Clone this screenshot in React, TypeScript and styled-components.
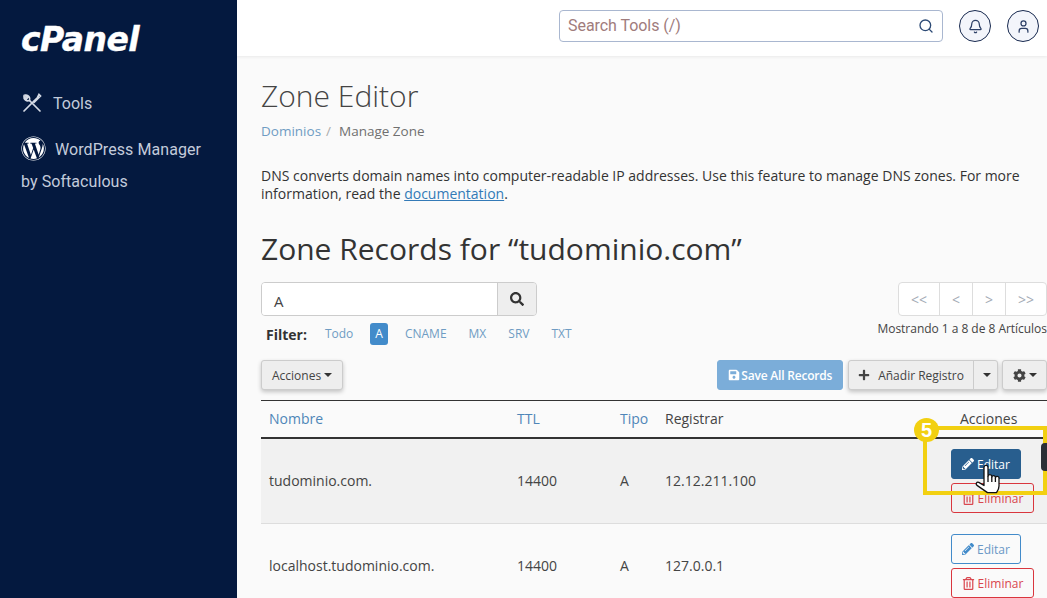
import React from 'react'
import styled, { createGlobalStyle } from 'styled-components'
import { Search, Bell, User } from 'lucide-react'
import { FaCog, FaPencilAlt, FaPlus, FaRegTrashAlt, FaSave, FaSearch, FaWordpress } from 'react-icons/fa'

const GlobalStyle = createGlobalStyle`
  html, body {
    margin: 0;
    height: 598px;
    overflow: hidden;
    background: #fafafa;
  }
  * {
    box-sizing: border-box;
  }
`

const Page = styled.div`
  position: relative;
  display: grid;
  grid-template-columns: 237px 810px;
  width: 1047px;
  height: 598px;
  overflow: hidden;
  font-family: 'Open Sans', sans-serif;
  color: #333;
`

const Sidebar = styled.aside`
  background: #04193f;
  padding: 24px 0 0 21px;
  font-family: Roboto, sans-serif;
  color: #c3cbdb;
  font-size: 16px;
`

const Logo = styled.div`
  font-family: 'DejaVu Sans', sans-serif;
  font-weight: 700;
  font-style: italic;
  font-size: 33px;
  line-height: 32px;
  letter-spacing: -0.5px;
  -webkit-text-stroke: 0.4px #fff;
  color: #fff;
  margin-bottom: 31px;
`

const NavItem = styled.div`
  display: flex;
  align-items: center;
  gap: 11px;
  height: 32px;
  margin-left: 1px;
  margin-bottom: 15px;
`

const WordpressItem = styled.div`
  line-height: 32px;
  letter-spacing: 0.07px;

  svg {
    vertical-align: -6px;
    margin-right: 9px;
    color: #fff;
  }
`

const Main = styled.main`
  display: flex;
  flex-direction: column;
  min-width: 0;
`

const TopBar = styled.header`
  display: flex;
  align-items: center;
  justify-content: flex-end;
  gap: 16px;
  height: 56px;
  flex: none;
  padding: 0 8px 4px 0;
  background: #fff;
  box-shadow: 0 1px 3px rgba(0, 0, 0, 0.07);
`

const ToolSearch = styled.div`
  display: flex;
  align-items: center;
  justify-content: space-between;
  width: 384px;
  height: 32px;
  padding: 0 8px 2px;
  background: #fff;
  border: 1px solid #a9b7d0;
  border-radius: 4px;
  font-family: Roboto, sans-serif;
  font-size: 16px;
  letter-spacing: -0.05px;
  color: #a07c7c;
  svg {
    color: #2c4a75;
    margin-top: 2px;
  }
`

const RoundButton = styled.div`
  display: flex;
  align-items: center;
  justify-content: center;
  width: 32px;
  height: 32px;
  border: 1px solid #17294f;
  border-radius: 50%;
  background: #f3f5fb;
  color: #2c3f66;
`

const Content = styled.div`
  padding: 21px 0 0 24px;
`

const PageTitle = styled.h1`
  margin: 0;
  font-size: 30px;
  line-height: 38px;
  font-weight: 300;
  color: #444;
`

const Breadcrumb = styled.div`
  display: flex;
  gap: 5px;
  margin-top: 6px;
  font-size: 13.5px;
  line-height: 20px;
  color: #707070;
  span:first-child {
    color: #6f9cc3;
  }
  span:nth-child(2) {
    color: #aaa;
    margin-right: 3px;
  }
`

const Intro = styled.p`
  margin: 26px 0 0;
  font-size: 14px;
  line-height: 18px;
  color: #333;
  a {
    color: #337ab7;
    text-decoration: underline;
  }
`

const ZoneHeading = styled.h2`
  margin: 26px 0 0;
  font-size: 30px;
  line-height: 40px;
  font-weight: 400;
  color: #333;
`

const ToolsRow = styled.div`
  display: flex;
  justify-content: space-between;
  margin-top: 13px;
`

const SearchGroup = styled.div`
  display: flex;
  width: 276px;
  height: 34px;
  border: 1px solid #ccc;
  border-radius: 4px;
  overflow: hidden;
`

const SearchValue = styled.div`
  flex: 1;
  background: #fff;
  padding: 8px 12px;
  font-size: 15px;
  line-height: 20px;
  color: #444;
`

const SearchAddon = styled.div`
  display: flex;
  align-items: center;
  justify-content: center;
  width: 39px;
  background: #eee;
  border-left: 1px solid #ccc;
  color: #333;
`

const FilterRow = styled.div`
  display: flex;
  align-items: center;
  height: 22px;
  margin-top: 7px;
  padding-left: 5px;
  font-size: 12px;
  color: #6f9cc3;
  b {
    font-size: 14px;
    color: #333;
    margin-right: 18px;
  }
`

const FilterLink = styled.span<{ $active?: boolean }>`
  display: inline-block;
  padding: 0 ${({ $active }) => ($active ? '5px' : '0')};
  margin-right: ${({ $active }) => ($active ? '17px' : '22px')};
  line-height: 22px;
  border-radius: 3px;
  background: ${({ $active }) => ($active ? '#428bca' : 'transparent')};
  color: ${({ $active }) => ($active ? '#fff' : '#6f9cc3')};

  &:first-of-type {
    margin-right: 17px;
  }
`

const PagerColumn = styled.div`
  display: flex;
  flex-direction: column;
  align-items: flex-end;
`

const Pager = styled.div`
  display: flex;
  height: 34px;
  border: 1px solid #ddd;
  border-radius: 4px;
  background: #fff;
  font-size: 14px;
  color: #a3abb5;
  span {
    display: flex;
    align-items: center;
    justify-content: center;
    width: 33px;
    border-left: 1px solid #ddd;
  }
  span:first-child {
    width: 40px;
    border-left: 0;
  }
  span:last-child {
    width: 41px;
  }
`

const PagerInfo = styled.div`
  margin-top: 3px;
  font-size: 12px;
  line-height: 20px;
  letter-spacing: -0.03px;
  color: #444;
`

const ActionsRow = styled.div`
  display: flex;
  align-items: center;
  justify-content: space-between;
  margin-top: 15px;
`

const ActionGroup = styled.div`
  display: flex;
  gap: 4px;
`

const GrayButton = styled.div<{ $compact?: boolean }>`
  display: flex;
  align-items: center;
  height: 30px;
  padding: 0 ${({ $compact }) => ($compact ? '9.5px' : '10px')};
  border: 1px solid #ccc;
  border-radius: 3px;
  background: #eee;
  box-shadow: 0 2px 4px rgba(0, 0, 0, 0.22);
  font-size: 12px;
  color: #444;
`

const Caret = styled.i`
  display: inline-block;
  margin-left: 3px;
  border-top: 4px solid #333;
  border-left: 4px solid transparent;
  border-right: 4px solid transparent;
`

const SplitButton = styled.div`
  display: flex;
  height: 30px;
  border: 1px solid #ccc;
  border-radius: 3px;
  background: #eee;
  box-shadow: 0 2px 4px rgba(0, 0, 0, 0.22);
  font-size: 12px;
  color: #444;
`

const SplitLabel = styled.div`
  display: flex;
  align-items: center;
  gap: 8px;
  padding: 0 9px;
`

const SplitCaret = styled.div`
  display: flex;
  align-items: center;
  padding: 0 6px;
  border-left: 1px solid #ccc;
`

const SaveButton = styled.div`
  display: flex;
  align-items: center;
  gap: 1px;
  height: 30px;
  margin-right: 1px;
  padding: 0 10px;
  border: 1px solid #7badd8;
  border-radius: 3px;
  background: #7badd9;
  color: #fff;
  font-size: 12px;
  font-weight: 600;
  letter-spacing: -0.2px;
`

const TableHead = styled.div`
  display: grid;
  grid-template-columns: 248px 103px 45px 1fr 104px;
  align-items: center;
  height: 39px;
  margin-top: 10px;
  padding-bottom: 2px;
  font-size: 14px;
  border-top: 1px solid #333;
  border-bottom: 2px solid #333;
`

const TableRow = styled.div<{ $striped?: boolean }>`
  display: grid;
  grid-template-columns: 248px 103px 45px 1fr 104px;
  align-items: center;
  height: 85px;
  padding-bottom: 2px;
  font-size: 14px;
  color: #444;
  background: ${({ $striped }) => ($striped ? '#f1f1f1' : 'transparent')};
  border-bottom: 1px solid #ddd;
`

const Cell = styled.div<{ $link?: boolean }>`
  padding-left: 8px;
  color: ${({ $link }) => ($link ? '#4f86b8' : '#444')};
`

const HeadActions = styled.div`
  padding-left: 17px;
  color: #444;
`

const RowActions = styled.div`
  display: flex;
  flex-direction: column;
  align-items: flex-start;
  gap: 4px;
  margin-top: 2px;
  padding-left: 8px;
`

const EditButton = styled.div<{ $hover?: boolean }>`
  display: flex;
  align-items: center;
  justify-content: center;
  gap: 3px;
  width: 70px;
  height: 30px;
  border: 1px solid ${({ $hover }) => ($hover ? '#285e8e' : '#428bca')};
  border-radius: 3px;
  background: ${({ $hover }) => ($hover ? '#285e8e' : 'transparent')};
  color: ${({ $hover }) => ($hover ? '#fff' : '#6a98c6')};
  font-size: 12px;
  svg {
    color: ${({ $hover }) => ($hover ? '#fff' : '#428bca')};
  }
`

const DeleteButton = styled.div`
  display: flex;
  align-items: center;
  justify-content: center;
  gap: 3px;
  width: 83px;
  height: 30px;
  border: 1px solid #d9363e;
  border-radius: 3px;
  color: #d9474f;
  font-size: 12px;
`

const Highlight = styled.div`
  position: absolute;
  left: 923px;
  top: 426px;
  width: 124px;
  height: 69px;
  border: 4px solid #f2d011;
  pointer-events: none;
`

const StepBadge = styled.div`
  position: absolute;
  left: 914px;
  top: 418px;
  display: flex;
  align-items: center;
  justify-content: center;
  width: 25px;
  height: 24px;
  border-radius: 50%;
  background: #f2d011;
  color: #fff;
  font-family: 'Liberation Sans', sans-serif;
  font-size: 20px;
  font-weight: 700;
`

const TooltipEdge = styled.div`
  position: absolute;
  left: 1041px;
  top: 443px;
  width: 6px;
  height: 28px;
  background: #2b2f36;
  border-radius: 4px 0 0 4px;
`

const Cursor = styled.svg`
  position: absolute;
  left: 975px;
  top: 465px;
`

const ToolsIcon = () => (
  <svg width="20" height="20" viewBox="0 0 20 20" fill="none" stroke="#d5dae5" strokeWidth="1.7" strokeLinecap="round">
    <path d="M2 18 11.5 8.5" />
    <path d="M12 8 15.5 4.5 17 1.5 18.5 3 15.5 6 12 9.5" />
    <path d="M18 18 7.5 7.5" />
    <path d="M7.5 7.5C8.6 4.6 6.2 1.6 3.2 2.2L5.6 4.6 4.6 6 2 3.6C1.6 6.6 4.6 8.8 7.5 7.5Z" />
  </svg>
)

const HandCursor = () => (
  <Cursor width="26" height="29" viewBox="0 0 26 29" fill="#fff" stroke="#111" strokeWidth="1.3" strokeLinejoin="round">
    <path d="M9 2.4a2 2 0 0 1 4 0V11a2 2 0 0 1 3.8 0v1a1.9 1.9 0 0 1 3.6 0v1a1.8 1.8 0 0 1 3.6.4V21c0 3-1.2 4.4-2.6 6.6H12.5L2 20.4c-1.6-1.6-.4-3.8 1.8-3L9 20.5Z" />
    <path d="M13 11v6M16.8 12v5M20.4 13v4" fill="none" />
  </Cursor>
)

const records = [
  { name: 'tudominio.com.', ip: '12.12.211.100', hover: true },
  { name: 'localhost.tudominio.com.', ip: '127.0.0.1', hover: false },
]

export default function App() {
  return (
    <Page>
      <GlobalStyle />
      <Sidebar>
        <Logo>cPanel</Logo>
        <NavItem>
          <ToolsIcon />
          Tools
        </NavItem>
        <WordpressItem>
          <FaWordpress size={25} />
          WordPress Manager
          <br />
          by Softaculous
        </WordpressItem>
      </Sidebar>
      <Main>
        <TopBar>
          <ToolSearch>
            Search Tools (/)
            <Search size={16} />
          </ToolSearch>
          <RoundButton>
            <Bell size={15} />
          </RoundButton>
          <RoundButton>
            <User size={15} />
          </RoundButton>
        </TopBar>
        <Content>
          <PageTitle>Zone Editor</PageTitle>
          <Breadcrumb>
            <span>Dominios</span>
            <span>/</span>
            <span>Manage Zone</span>
          </Breadcrumb>
          <Intro>
            DNS converts domain names into computer-readable IP addresses. Use this feature to manage DNS zones. For more
            information, read the <a>documentation</a>.
          </Intro>
          <ZoneHeading>Zone Records for “tudominio.com”</ZoneHeading>
          <ToolsRow>
            <div>
              <SearchGroup>
                <SearchValue>A</SearchValue>
                <SearchAddon>
                  <FaSearch size={14} />
                </SearchAddon>
              </SearchGroup>
              <FilterRow>
                <b>Filter:</b>
                <FilterLink>Todo</FilterLink>
                <FilterLink $active>A</FilterLink>
                <FilterLink>CNAME</FilterLink>
                <FilterLink>MX</FilterLink>
                <FilterLink>SRV</FilterLink>
                <FilterLink>TXT</FilterLink>
              </FilterRow>
            </div>
            <PagerColumn>
              <Pager>
                <span>&lt;&lt;</span>
                <span>&lt;</span>
                <span>&gt;</span>
                <span>&gt;&gt;</span>
              </Pager>
              <PagerInfo>Mostrando 1 a 8 de 8 Artículos</PagerInfo>
            </PagerColumn>
          </ToolsRow>
          <ActionsRow>
            <GrayButton>
              Acciones
              <Caret />
            </GrayButton>
            <ActionGroup>
              <SaveButton>
                <FaSave size={12} />
                Save All Records
              </SaveButton>
              <SplitButton>
                <SplitLabel>
                  <FaPlus size={12} />
                  Añadir Registro
                </SplitLabel>
                <SplitCaret>
                  <Caret />
                </SplitCaret>
              </SplitButton>
              <GrayButton $compact>
                <FaCog size={13} />
                <Caret />
              </GrayButton>
            </ActionGroup>
          </ActionsRow>
          <TableHead>
            <Cell $link>Nombre</Cell>
            <Cell $link>TTL</Cell>
            <Cell $link>Tipo</Cell>
            <Cell>Registrar</Cell>
            <HeadActions>Acciones</HeadActions>
          </TableHead>
          {records.map((record) => (
            <TableRow key={record.name} $striped={record.hover}>
              <Cell>{record.name}</Cell>
              <Cell>14400</Cell>
              <Cell>A</Cell>
              <Cell>{record.ip}</Cell>
              <RowActions>
                <EditButton $hover={record.hover}>
                  <FaPencilAlt size={12} />
                  Editar
                </EditButton>
                <DeleteButton>
                  <FaRegTrashAlt size={13} />
                  Eliminar
                </DeleteButton>
              </RowActions>
            </TableRow>
          ))}
        </Content>
      </Main>
      <Highlight />
      <StepBadge>5</StepBadge>
      <TooltipEdge />
      <HandCursor />
    </Page>
  )
}
